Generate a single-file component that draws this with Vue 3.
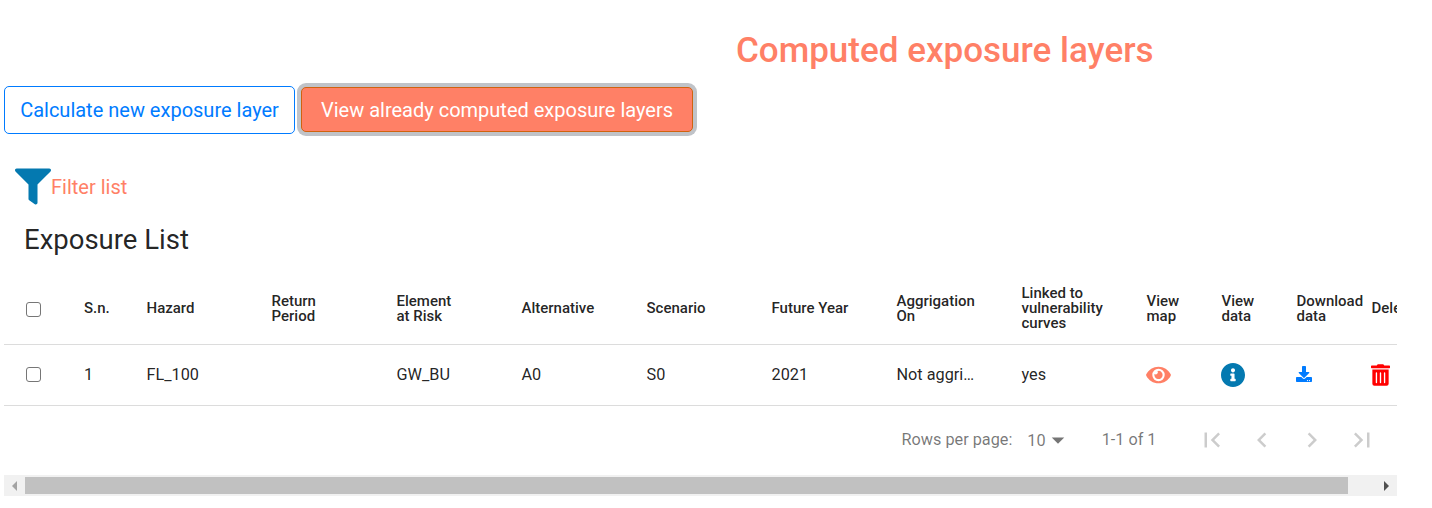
<script setup>
const columns = [
  { key: 'sn', label: ['S.n.'], size: 'tiny', value: '1' },
  { key: 'hazard', label: ['Hazard'], size: 'wide', value: 'FL_100' },
  { key: 'period', label: ['Return', 'Period'], size: 'wide', value: '' },
  { key: 'element', label: ['Element', 'at Risk'], size: 'wide', value: 'GW_BU' },
  { key: 'alternative', label: ['Alternative'], size: 'wide', value: 'A0' },
  { key: 'scenario', label: ['Scenario'], size: 'wide', value: 'S0' },
  { key: 'year', label: ['Future Year'], size: 'wide', value: '2021' },
  { key: 'aggregation', label: ['Aggrigation', 'On'], size: 'wide', value: 'Not aggri…' },
  { key: 'linked', label: ['Linked to', 'vulnerability', 'curves'], size: 'wide', value: 'yes' },
  { key: 'map', label: ['View', 'map'], size: 'action', icon: 'eye' },
  { key: 'data', label: ['View', 'data'], size: 'action', icon: 'info' },
  { key: 'download', label: ['Download', 'data'], size: 'action', icon: 'download' },
  { key: 'delete', label: ['Delete'], size: 'action', icon: 'trash' },
]

const icons = {
  eye: {
    box: '0 0 576 512',
    d: 'M572.52 241.4C518.29 135.59 410.93 64 288 64S57.68 135.64 3.48 241.41a32.35 32.35 0 0 0 0 29.19C57.71 376.41 165.07 448 288 448s230.32-71.64 284.52-177.41a32.35 32.35 0 0 0 0-29.19zM288 400a144 144 0 1 1 144-144 143.93 143.93 0 0 1-144 144zm0-240a95.31 95.31 0 0 0-25.31 3.79 47.85 47.85 0 0 1-66.9 66.9A95.78 95.78 0 1 0 288 160z',
  },
  info: {
    box: '8 8 496 496',
    d: 'M256 8C119.043 8 8 119.083 8 256c0 136.997 111.043 248 248 248s248-111.003 248-248C504 119.083 392.957 8 256 8zm0 110c23.196 0 42 18.804 42 42s-18.804 42-42 42-42-18.804-42-42 18.804-42 42-42zm56 254c0 6.627-5.373 12-12 12h-88c-6.627 0-12-5.373-12-12v-24c0-6.627 5.373-12 12-12h12v-64h-12c-6.627 0-12-5.373-12-12v-24c0-6.627 5.373-12 12-12h64c6.627 0 12 5.373 12 12v100h12c6.627 0 12 5.373 12 12v24z',
  },
  download: {
    box: '0 0 512 512',
    d: 'M216 0h80c13.3 0 24 10.7 24 24v168h87.7c17.8 0 26.7 21.5 14.1 34.1L269.7 378.3c-7.5 7.5-19.8 7.5-27.3 0L90.1 226.1c-12.6-12.6-3.7-34.1 14.1-34.1H192V24c0-13.3 10.7-24 24-24zm296 376v112c0 13.3-10.7 24-24 24H24c-13.3 0-24-10.7-24-24V376c0-13.3 10.7-24 24-24h146.7l49 49c20.1 20.1 52.5 20.1 72.6 0l49-49H488c13.3 0 24 10.7 24 24zm-124 88c0-11-9-20-20-20s-20 9-20 20 9 20 20 20 20-9 20-20zm64 0c0-11-9-20-20-20s-20 9-20 20 9 20 20 20 20-9 20-20z',
  },
  trash: {
    box: '0 0 448 512',
    d: 'M32 464a48 48 0 0 0 48 48h288a48 48 0 0 0 48-48V128H32zm272-256a16 16 0 0 1 32 0v224a16 16 0 0 1-32 0zm-96 0a16 16 0 0 1 32 0v224a16 16 0 0 1-32 0zm-96 0a16 16 0 0 1 32 0v224a16 16 0 0 1-32 0zM432 32H312l-9.4-18.7A24 24 0 0 0 281.1 0H166.8a23.72 23.72 0 0 0-21.4 13.3L136 32H16A16 16 0 0 0 0 48v32a16 16 0 0 0 16 16h416a16 16 0 0 0 16-16V48a16 16 0 0 0-16-16z',
  },
}

const pagers = [
  'M18.41 16.59L13.82 12l4.59-4.59L17 6l-6 6 6 6zM6 6h2v12H6z',
  'M15.41 7.41L14 6l-6 6 6 6 1.41-1.41L10.83 12z',
  'M10 6L8.59 7.41 13.17 12l-4.58 4.59L10 18l6-6z',
  'M5.59 7.41L10.18 12l-4.59 4.59L7 18l6-6-6-6zM16 6h2v12h-2z',
]
</script>

<template>
  <main class="page">
    <h1 class="title">Computed exposure layers</h1>

    <div class="tabs">
      <button class="btn outline">Calculate new exposure layer</button>
      <button class="btn active">View already computed exposure layers</button>
    </div>

    <div class="filter">
      <svg class="funnel" viewBox="0 0 512 512">
        <path d="M487.976 0H24.028C2.71 0-8.047 25.866 7.058 40.971L192 225.941V432c0 7.831 3.821 15.17 10.237 19.662l80 55.98C298.02 518.69 320 507.493 320 487.98V225.941l184.947-184.97C520.021 25.896 509.338 0 487.976 0z" />
      </svg>
      <span>Filter list</span>
    </div>

    <h2 class="subtitle">Exposure List</h2>

    <section class="table">
      <div class="row head">
        <div class="check"><i class="box"></i></div>
        <div v-for="c in columns" :key="c.key" class="cell" :class="c.size">
          <span v-for="line in c.label" :key="line" class="line">{{ line }}</span>
        </div>
      </div>
      <div class="row body">
        <div class="check"><i class="box"></i></div>
        <div v-for="c in columns" :key="c.key" class="cell" :class="c.size">
          <svg v-if="c.icon" :class="c.icon" :viewBox="icons[c.icon].box">
            <path :d="icons[c.icon].d" />
          </svg>
          <span v-else class="value">{{ c.value }}</span>
        </div>
      </div>
    </section>

    <footer class="pagination">
      <span class="per-page">Rows per page:</span>
      <span class="amount">10</span>
      <svg class="caret" viewBox="0 0 24 24"><path d="M7 10l5 5 5-5z" /></svg>
      <span class="range">1-1 of 1</span>
      <div class="pagers">
        <svg v-for="d in pagers" :key="d" viewBox="0 0 24 24"><path :d="d" /></svg>
      </div>
    </footer>

    <div class="scrollbar">
      <svg class="arrow left" viewBox="0 0 5 10"><path d="M5 0v10L0 5z" /></svg>
      <div class="thumb"></div>
      <svg class="arrow right" viewBox="0 0 5 10"><path d="M0 0v10l5-5z" /></svg>
    </div>
  </main>
</template>

<style>
body {
  background: #fff;
}
</style>

<style scoped>
.page {
  box-sizing: border-box;
  width: 1397px;
  height: 508px;
  padding-left: 4px;
  overflow: hidden;
  font-family: Roboto, "Liberation Sans", sans-serif;
  color: rgba(0, 0, 0, 0.87);
}
svg {
  display: block;
  flex: none;
  fill: currentColor;
}
.title {
  margin: 30px 0 0 732px;
  height: 42px;
  font-size: 35px;
  line-height: 42px;
  font-weight: 500;
  color: #ff8066;
  white-space: nowrap;
}
.tabs {
  display: flex;
  gap: 6px;
  margin-top: 14px;
  height: 48px;
}
.btn {
  box-sizing: border-box;
  height: 48px;
  padding: 0;
  border: 1px solid #007bff;
  border-radius: 5px;
  background: #fff;
  color: #007bff;
  font: 400 20px/30px Roboto, "Liberation Sans", sans-serif;
  white-space: nowrap;
}
.outline {
  width: 291px;
}
.active {
  width: 392px;
  height: 45px;
  margin-top: 1px;
  border-color: #d0620f;
  background: #ff8066;
  color: #fff;
  box-shadow: 0 0 0 4px #c0c3c8;
}
.filter {
  display: flex;
  align-items: center;
  margin: 34px 0 0 11px;
  height: 37px;
  font-size: 20px;
  color: #ff8066;
}
.funnel {
  width: 36px;
  height: 37px;
  color: #0479b0;
}
.subtitle {
  margin: 18px 0 0 20px;
  height: 34px;
  font-size: 27.5px;
  line-height: 34px;
  font-weight: 400;
}
.table {
  margin-top: 17px;
  overflow: hidden;
}
.row {
  box-sizing: border-box;
  display: flex;
  width: 1450px;
  border-bottom: 1px solid #dcdcdc;
}
.head {
  height: 71px;
  font-size: 15px;
  line-height: 15px;
  font-weight: 500;
}
.body {
  height: 61px;
  font-size: 16.25px;
}
.check {
  box-sizing: border-box;
  display: flex;
  align-items: center;
  width: 75px;
  padding-left: 22px;
}
.body .check {
  padding-bottom: 2px;
}
.box {
  box-sizing: border-box;
  width: 15px;
  height: 15px;
  border: 1px solid #767676;
  border-radius: 3px;
}
.cell {
  box-sizing: border-box;
  display: flex;
  flex: none;
  flex-direction: column;
  justify-content: center;
  padding-left: 5px;
  white-space: nowrap;
}
.head .cell {
  padding-bottom: 1px;
}
.value {
  padding-bottom: 2px;
}
.tiny {
  width: 62.5px;
}
.wide {
  width: 125px;
}
.action {
  width: 75px;
}
.eye {
  width: 25px;
  height: 22px;
  margin-left: -0.5px;
  color: #ff8066;
}
.info {
  width: 24px;
  height: 24px;
  margin-left: -0.5px;
  color: #0479b0;
}
.download {
  width: 16px;
  height: 16px;
  margin: -2px 0 0 -0.5px;
  color: #007bff;
}
.trash {
  width: 19px;
  height: 22px;
  margin-left: -0.5px;
  color: #f00;
}
.pagination {
  box-sizing: border-box;
  display: flex;
  align-items: center;
  justify-content: flex-end;
  height: 69px;
  padding: 0 20.5px 2px 0;
  font-size: 16.25px;
  color: rgba(0, 0, 0, 0.54);
}
.amount {
  margin: 2px 0 0 15px;
}
.caret {
  width: 30px;
  height: 30px;
  margin: 1px 0 0 -3px;
}
.range {
  margin-left: 29px;
}
.pagers {
  display: flex;
  gap: 20px;
  margin-left: 40px;
  color: rgba(0, 0, 0, 0.2);
}
.pagers svg {
  width: 30px;
  height: 30px;
}
.scrollbar {
  box-sizing: border-box;
  display: flex;
  align-items: center;
  height: 21px;
  padding: 0 8px;
  background: #f1f1f1;
}
.arrow {
  width: 5px;
  height: 10px;
}
.left {
  color: #a3a3a3;
}
.right {
  color: #505050;
}
.thumb {
  flex: 1;
  height: 17px;
  margin: 0 36px 0 8px;
  background: #c1c1c1;
}
</style>
